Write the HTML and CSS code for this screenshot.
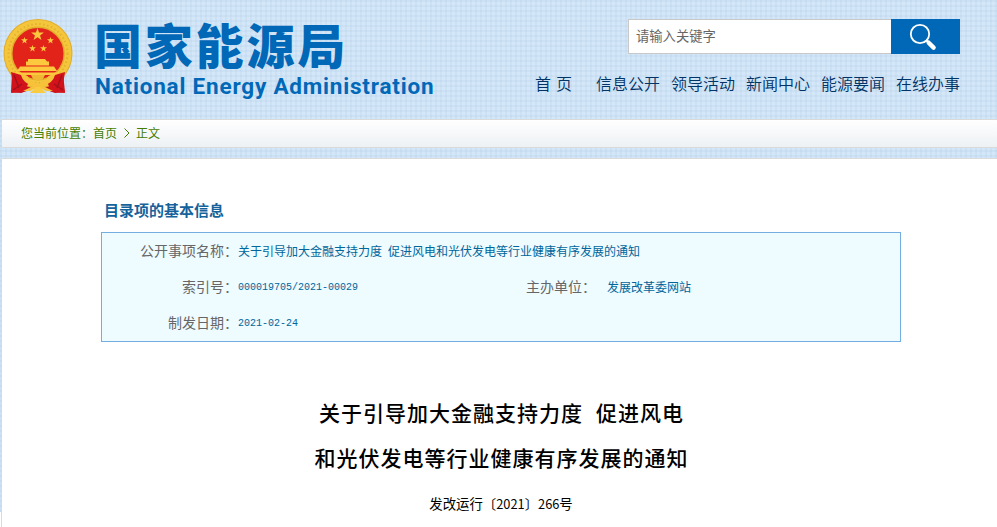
FILE: index.html
```html
<!DOCTYPE html>
<html lang="zh-CN">
<head>
<meta charset="utf-8">
<title>国家能源局</title>
<link rel="stylesheet" href="styles.css">
</head>
<body>
<header class="header">
  <div class="brand">
    <svg class="emblem" width="70" height="76" viewBox="0 0 70 76">
      <defs>
        <path id="star" d="M0-6 1.4-1.9H5.8L2.3.8 3.6 5 0 2.4-3.6 5-2.3.8-5.8-1.9H-1.4Z"/>
      </defs>
      <path d="M9 54 60 54 62 73 52 74 35 68 18 74 8 73Z" fill="#c9151b"/>
      <circle cx="35" cy="34.5" r="30" fill="#e2231a" stroke="#e3ad2b" stroke-width="9"/>
      <circle cx="35" cy="34.5" r="30.2" fill="none" stroke="#f3c63c" stroke-width="6.5"/>
      <circle cx="35" cy="34.5" r="29.5" fill="none" stroke="#e6b12e" stroke-width="2" stroke-dasharray="1.5 2.5"/>
      <g fill="#fbc83e">
        <use href="#star" transform="translate(34.5 15.5) scale(1.1)"/>
        <use href="#star" transform="translate(21.5 21.5) scale(.6)"/>
        <use href="#star" transform="translate(47.5 21.5) scale(.6)"/>
        <use href="#star" transform="translate(29.5 29.5) scale(.6)"/>
        <use href="#star" transform="translate(40.5 29.5) scale(.6)"/>
        <path d="M25 40H42L44 42.5H46V46.5H23V42.5H25ZM17 47.5H51L54 52H14ZM12 53.5H58L56 56H14Z"/>
      </g>
      <path d="M8 53 18 56 26 63 21 73 8 74 10 66ZM62 53 52 56 44 63 49 73 62 74 60 66Z" fill="#d2131b"/>
      <path d="M11 56 16 69M59 56 54 69M10 71 19 65M60 71 51 65" stroke="#a01019" stroke-width="1.3" fill="none"/>
      <path d="M18 56Q25 55 27 61L35 65 43 61Q45 55 52 56 50 64 40 67L50 72H43L37 69H33L27 72H20L30 67Q20 64 18 56Z" fill="#f7c13a"/>
      <path d="M28 56H42L40 60 35 62 30 60Z" fill="#efb832"/>
      <path d="M27 74 33 68H37L43 74Z" fill="#f9cb40"/>
    </svg>
    <div class="names">
      <div class="name-zh">国家能源局</div>
      <div class="name-en">National Energy Administration</div>
    </div>
  </div>
  <div class="tools">
    <form class="search">
      <input class="search-input" type="text" placeholder="请输入关键字">
      <button class="search-button" type="button" aria-label="搜索">
        <svg width="28" height="28" viewBox="0 0 28 28" fill="none" stroke="#fff">
          <circle cx="11" cy="11" r="9.2" stroke-width="1.8"/>
          <path d="M17 17 20 20" stroke-width="2"/>
          <path d="M19.7 19.7 24.6 24.6" stroke-width="4.4" stroke-linecap="round"/>
        </svg>
      </button>
    </form>
    <nav class="nav">
      <a class="home">首 页</a><a>信息公开</a><a>领导活动</a><a>新闻中心</a><a>能源要闻</a><a>在线办事</a>
    </nav>
  </div>
</header>
<div class="crumbs">您当前位置：<a>首页</a><svg class="chevron" width="6" height="10" viewBox="0 0 6 10"><path d="M.5.5 5 5 .5 9.5" fill="none" stroke="#447d00"/></svg><a>正文</a></div>
<main class="content">
  <h2 class="info-title">目录项的基本信息</h2>
  <dl class="info">
    <dt>公开事项名称：</dt><dd class="wide">关于引导加大金融支持力度<span class="gap"></span>促进风电和光伏发电等行业健康有序发展的通知</dd>
    <dt>索引号：</dt><dd class="code">000019705/2021-00029</dd>
    <dt class="unit">主办单位：</dt><dd>发展改革委网站</dd>
    <dt>制发日期：</dt><dd class="code">2021-02-24</dd>
  </dl>
  <h1 class="title"><span>关于引导加大金融支持力度<span class="title-gap"></span>促进风电</span><span>和光伏发电等行业健康有序发展的通知</span></h1>
  <p class="doc-no">发改运行〔<span class="num">2021</span>〕<span class="num">266</span>号</p>
</main>
</body>
</html>
```
FILE: styles.css
```css
* { box-sizing: border-box; }
body {
  margin: 0;
  height: 527px;
  overflow: hidden;
  font-family: "Liberation Sans", "Noto Sans CJK SC", sans-serif;
  background:
    linear-gradient(90deg, #fff 1px, #dadada 1px) 0 512px / 2px 15px no-repeat,
    repeating-linear-gradient(90deg, rgba(160, 192, 222, .16) 0 2px, transparent 2px 5px),
    repeating-linear-gradient(0deg, rgba(160, 192, 222, .16) 0 2px, transparent 2px 5px),
    #d4e7f8;
}
.header {
  height: 119px;
  display: flex;
  justify-content: space-between;
  padding: 19px 37px 0 3px;
}
.brand { display: flex; }
.emblem { flex: none; }
.names { padding-left: 21px; color: #0068b7; white-space: nowrap; }
.name-zh {
  font: 900 48px/48px "Noto Sans CJK SC", sans-serif;
  letter-spacing: 2.8px;
  height: 53px;
}
.name-en {
  padding-left: 1px;
  font: bold 22.5px/28px Roboto, sans-serif;
  letter-spacing: .8px;
}
.tools { width: 425px; }
.search { display: flex; width: 332px; height: 35px; margin: 0 0 0 auto; }
.search-input {
  flex: 1;
  min-width: 0;
  border: 1px solid #c8c8c8;
  border-right: 0;
  border-radius: 0;
  padding: 0 7px 2px;
  font: 13.3px "Noto Sans CJK SC", sans-serif;
  background: #fff;
}
.search-input::placeholder { color: #666; }
.search-button {
  width: 69px;
  border: 0;
  padding: 0 5px 0 0;
  display: flex;
  align-items: center;
  justify-content: center;
  background: #0068b7;
}
.nav {
  display: flex;
  justify-content: space-between;
  margin-top: 17px;
  font: 350 16px/24px "Noto Sans CJK SC", sans-serif;
  color: #003366;
}
.home { margin-right: 13px; word-spacing: 1.5px; }
.crumbs {
  height: 29px;
  margin-left: 2px;
  padding: 0 0 2px 19px;
  display: flex;
  align-items: center;
  border: solid #dadada;
  border-width: 1px 0;
  background: linear-gradient(#fff, #edf1f4);
  font: 12px/25px "Noto Sans CJK SC", sans-serif;
  color: #447d00;
}
.chevron { margin: 0 6px 0 7px; }
.content {
  height: 369px;
  margin: 10px 0 0 2px;
  border-top: 1px solid #dadada;
  background: #fff;
  padding: 41px 96px 0 99px;
}
.info-title {
  margin: 0 0 0 3px;
  font: bold 15px/20px "Noto Sans CJK SC", sans-serif;
  color: #16639b;
}
.info {
  margin: 12px 0 0;
  width: 800px;
  height: 110px;
  border: 1px solid #74ade0;
  background: #eefbff;
  display: grid;
  grid-template-columns: 136px 288px 81px 1fr;
  grid-auto-rows: 36px;
  line-height: 35px;
  font-family: "Noto Sans CJK SC", sans-serif;
}
.info dt { text-align: right; font-size: 14px; line-height: 34px; color: #666; white-space: nowrap; }
.info dt.unit { text-align: left; }
.info dd { margin: 0; font-size: 12px; color: #00659b; }
.info dd.wide { grid-column: 2 / -1; }
.info dd.code { font: 10px/37px "Liberation Mono", monospace; }
.gap { display: inline-block; width: 6px; }
.title {
  margin: 48px 0 0;
  text-align: center;
  font: 500 21px/45px "Noto Sans CJK SC", sans-serif;
  letter-spacing: 1px;
  color: #000;
}
.title > span { display: block; padding-left: 1px; }
.title-gap { display: inline-block; width: 13px; }
.doc-no {
  margin: 12px 0 0;
  text-align: center;
  font: 13.4px/22px "Noto Sans CJK SC", sans-serif;
  color: #000;
}
.num { font-size: 12.8px; }
```
